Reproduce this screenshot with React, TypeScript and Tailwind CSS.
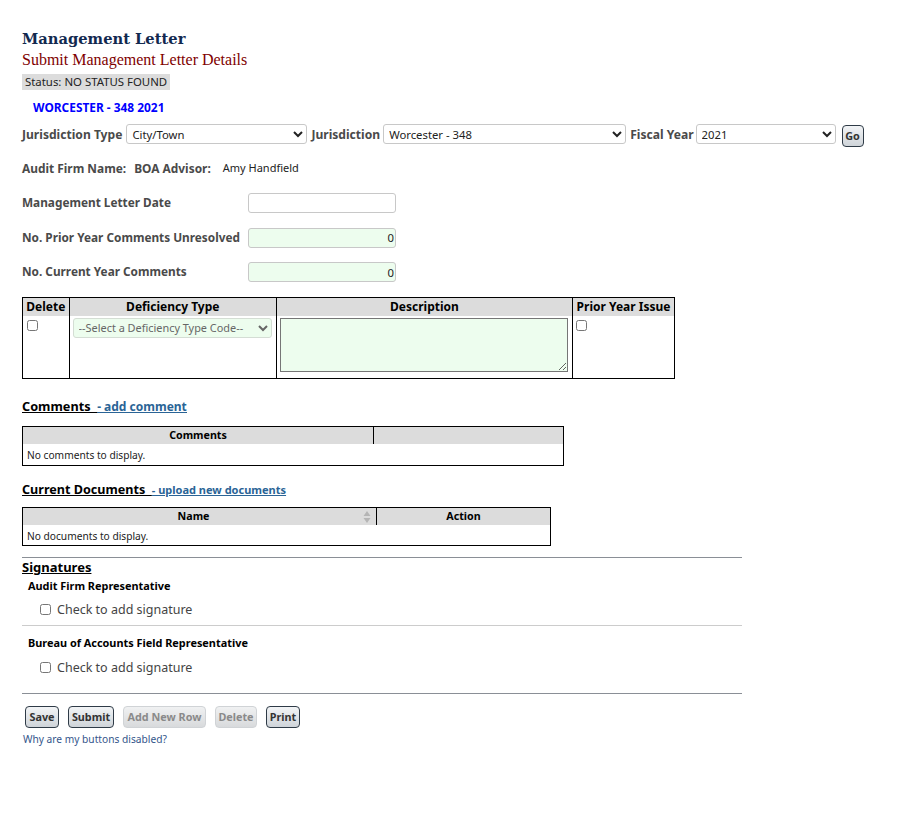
const FONT = "font-['Noto_Sans',sans-serif]";

function SmallButton({ label, width, disabled }: { label: string; width: string; disabled?: boolean }) {
  return (
    <button
      disabled={disabled}
      className={
        disabled
          ? `${width} h-[22px] rounded-[4px] border border-[#d0d3d6] bg-gradient-to-b from-[#f0f1f2] to-[#d8dadc] text-[10.8px] font-bold text-[#8a8a8a]`
          : `${width} h-[22px] rounded-[4px] border border-[#2f3b47] bg-gradient-to-b from-[#f2f4f6] to-[#cfd4d9] text-[10.8px] font-bold text-[#333333]`
      }
    >
      {label}
    </button>
  );
}

function FormRow({ label, value, green, last }: { label: string; value?: string; green?: boolean; last?: boolean }) {
  return (
    <div className={`flex items-center h-5 ${last ? "mb-[15px]" : "mb-[14.5px]"}`}>
      <span className="w-[226px] text-[11.8px] font-bold text-[#4a4a4a]">{label}</span>
      <input
        readOnly
        value={value ?? ""}
        className={`w-[148px] h-5 pl-[3px] pr-[1px] rounded-[3px] border border-[#c8c8c8] text-right text-[11.3px] text-[#222222] ${green ? "bg-[#edfdee]" : "bg-white"}`}
      />
    </div>
  );
}

function Signature({ title, second }: { title: string; second?: boolean }) {
  return (
    <div>
      <div className="ml-[6px] text-[10.9px] leading-[14px] font-bold text-black">{title}</div>
      <label className={`flex items-center ml-[18px] text-[12.5px] leading-4 text-[#444444] ${second ? "mt-[10px]" : "mt-[9px]"}`}>
        <input type="checkbox" className="w-[11px] h-[11px] mr-[6px] -mt-[1px]" />
        Check to add signature
      </label>
    </div>
  );
}

export default function App() {
  return (
    <div className={`${FONT} w-[900px] h-[836px] bg-white pl-[22px] pt-[29px] text-black`}>
      <h1 className="font-['DejaVu_Serif',serif] text-[14.7px] leading-[20px] font-bold text-[#12294f]">Management Letter</h1>
      <h2 className="font-['Liberation_Serif',serif] mt-[1px] text-base leading-[19px] text-[#800000]">Submit Management Letter Details</h2>
      <div className="mt-[5px] w-max bg-[#dcdcdc] px-[3px] text-[11.4px] leading-4 text-[#222222]">Status: NO STATUS FOUND</div>
      <div className="ml-[11px] mt-[10px] text-[11.9px] leading-[14px] font-bold text-[#0000ff]">WORCESTER - 348 2021</div>

      <div className="flex items-center mt-[9px] h-[22px] text-[12.1px] font-bold text-[#4a4a4a]">
        <span className="mt-[3px]">Jurisdiction Type</span>
        <select className="ml-[4px] w-[181px] h-5 pl-[1px] rounded-[3px] border border-[#c8c8c8] bg-white text-[11.3px] font-normal text-[#222222]">
          <option>City/Town</option>
        </select>
        <span className="ml-[4px] mt-[3px]">Jurisdiction</span>
        <select className="ml-[3px] w-[243px] h-5 pl-[1px] rounded-[3px] border border-[#c8c8c8] bg-white text-[11.3px] font-normal text-[#222222]">
          <option>Worcester - 348</option>
        </select>
        <span className="ml-[4px] mt-[3px]">Fiscal Year</span>
        <select className="ml-[2px] w-[140px] h-5 pl-[1px] rounded-[3px] border border-[#c8c8c8] bg-white text-[11.3px] font-normal text-[#222222]">
          <option>2021</option>
        </select>
        <div className="ml-[6px] mt-[4px] flex">
          <SmallButton label="Go" width="w-[22px]" />
        </div>
      </div>

      <div className="flex items-center mt-[16px] h-4 text-[11.9px]">
        <span className="font-bold text-[#4a4a4a]">Audit Firm Name:</span>
        <span className="ml-[8px] font-bold text-[#4a4a4a]">BOA Advisor:</span>
        <span className="ml-3 text-[11px] text-[#222222] -mt-[2px]">Amy Handfield</span>
      </div>

      <div className="mt-[16px]">
        <FormRow label="Management Letter Date" />
        <FormRow label="No. Prior Year Comments Unresolved" value="0" green />
        <FormRow label="No. Current Year Comments" value="0" green last />
      </div>

      <table className="mt-[5px] w-[653px] h-[82px] table-fixed border-collapse border border-black text-xs">
        <thead>
          <tr className="h-[18px] bg-[#dcdcdc] font-bold">
            <th className="w-[46.6px] border-r border-black font-bold">Delete</th>
            <th className="w-[207.4px] border-r border-black font-bold">Deficiency Type</th>
            <th className="w-[296px] border-r border-black font-bold">Description</th>
            <th className="font-bold">Prior Year Issue</th>
          </tr>
        </thead>
        <tbody>
          <tr>
            <td className="border-r border-black align-top pl-[4px] pt-[4px]">
              <input type="checkbox" className="block w-[11px] h-[11px]" />
            </td>
            <td className="border-r border-black align-top pl-[3px] pt-[2px]">
              <select className="w-[199px] h-5 pl-[1px] rounded-[3px] border border-[#d4ddd4] bg-[#edfdee] text-[10.9px] text-[#666666]">
                <option>--Select a Deficiency Type Code--</option>
              </select>
            </td>
            <td className="border-r border-black align-top pl-[3px] pt-[2px]">
              <textarea className="block w-[288px] h-[54px] border border-[#767676] bg-[#edfdee]" />
            </td>
            <td className="align-top pl-[3px] pt-[4px]">
              <input type="checkbox" className="block w-[11px] h-[11px]" />
            </td>
          </tr>
        </tbody>
      </table>

      <div className="mt-[19px] text-[12.7px] leading-4 font-bold underline text-black">
        Comments&nbsp; <a className="text-xs text-[#2a6496]">- add comment</a>
      </div>

      <table className="mt-[11px] w-[542px] table-fixed border-collapse border border-black text-[10.7px]">
        <thead>
          <tr className="h-[17px] bg-[#dcdcdc]">
            <th className="w-[351px] border-r border-black font-bold">Comments</th>
            <th />
          </tr>
        </thead>
        <tbody>
          <tr className="h-[22px]">
            <td colSpan={2} className="pl-[4px] pt-[2px] text-[10.2px] text-[#222222]">No comments to display.</td>
          </tr>
        </tbody>
      </table>

      <div className="mt-[16px] text-[12.6px] leading-4 font-bold underline text-black">
        Current Documents&nbsp; <a className="text-[11px] text-[#2a6496]">- upload new documents</a>
      </div>

      <table className="mt-[9px] w-[529px] table-fixed border-collapse border border-black text-[10.7px]">
        <thead>
          <tr className="h-[17px] bg-[#dcdcdc]">
            <th className="relative w-[354px] border-r border-black font-bold pr-[12px]">
              Name
              <svg viewBox="0 0 8 14" className="absolute right-[5px] top-[2px] w-[8px] h-[14px]">
                <path d="M4 1 L7.5 6 L0.5 6 Z M4 13 L0.5 8 L7.5 8 Z" fill="#b5b5b5" />
              </svg>
            </th>
            <th className="font-bold">Action</th>
          </tr>
        </thead>
        <tbody>
          <tr className="h-[21px]">
            <td colSpan={2} className="pl-[4px] pt-[3px] text-[10.2px] text-[#222222]">No documents to display.</td>
          </tr>
        </tbody>
      </table>

      <div className="mt-[11px] w-[720px] border-t border-[#8a8f96]" />
      <div className="mt-[1px] text-[13px] leading-4 font-bold underline text-black">Signatures</div>
      <div className="mt-[4px]">
        <Signature title="Audit Firm Representative" />
      </div>
      <div className="mt-[7px] mb-[10px] w-[720px] border-t border-[#cccccc]" />
      <Signature title="Bureau of Accounts Field Representative" second />
      <div className="mt-[17px] w-[720px] border-t border-[#8a8f96]" />

      <div className="flex mt-[12px] ml-[3px] gap-[9px]">
        <SmallButton label="Save" width="w-[34px]" />
        <SmallButton label="Submit" width="w-[46px]" />
        <SmallButton label="Add New Row" width="w-[83px]" disabled />
        <SmallButton label="Delete" width="w-[42px]" disabled />
        <SmallButton label="Print" width="w-[34px]" />
      </div>
      <a className="block mt-[4px] ml-[1px] text-[10.2px] leading-[14px] text-[#34558b]">Why are my buttons disabled?</a>
    </div>
  );
}
